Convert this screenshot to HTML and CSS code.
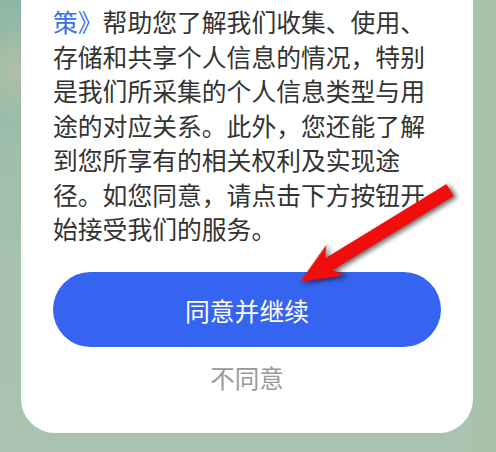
FILE: index.html
```html
<!DOCTYPE html>
<html lang="zh-CN">
<head>
<meta charset="utf-8"/>
<meta content="width=device-width, initial-scale=1.0" name="viewport"/>
<title>个人信息保护指引</title>
<link rel="stylesheet" href="styles.css">
</head>
<body>
<div class="dialog">
  <p class="policy">
    <a class="policy-link" href="#">策》</a>帮助您了解我们收集、使用、<br/>存储和共享个人信息的情况，特别<br/>是我们所采集的个人信息类型与用<br/>途的对应关系。此外，您还能了解<br/>到您所享有的相关权利及实现途<br/>径。如您同意，请点击下方按钮开<br/>始接受我们的服务。
  </p>
  <button class="btn-agree">同意并继续</button>
  <div class="btn-decline">不同意</div>
</div>
<!-- red pointer drawn over the dialog -->
<svg class="pointer" width="496" height="452" viewBox="0 0 496 452">
  <g transform="translate(300 282) rotate(-31.5)">
    <polygon class="pointer-shape" points="0,0 42,-18 34,-7 176,-7 176,7 34,7 42,18"/>
  </g>
</svg>
</body>
</html>
```

FILE: styles.css
```css
  body {
    margin: 0;
    width: 496px;
    height: 452px;
    overflow: hidden;
    position: relative;
    font-family: "Noto Sans CJK SC", "Noto Sans", sans-serif;
    background:
      radial-gradient(ellipse 30px 50px at 14px 70px, rgba(200,196,160,0.55), transparent),
      linear-gradient(to right, transparent 0 470px, #a8c1ab 470px),
      linear-gradient(to bottom, #8fb6a6 0%, #9dbdab 30%, #a7c1ad 60%, #aac3ae 100%);
  }
  .dialog {
    margin: 0 23px 0 21px;
    padding: 4px 32px 40px;
    background: #ffffff;
    border-radius: 0 0 34px 34px;
  }
  .policy {
    margin: 0;
    font-size: 24.8px;
    line-height: 34.5px;
    color: #333333;
    white-space: nowrap;
  }
  .policy-link {
    color: #3a6fe8;
    text-decoration: none;
  }
  .btn-agree {
    display: block;
    width: 100%;
    height: 75px;
    margin-top: 26.5px;
    border: none;
    border-radius: 38px;
    background-color: #3464f0;
    color: #ffffff;
    font-family: inherit;
    font-size: 24.8px;
    cursor: pointer;
  }
  .btn-decline {
    margin-top: 16px;
    text-align: center;
    font-size: 24.5px;
    line-height: 30px;
    color: #999999;
  }
  .pointer {
    position: absolute;
    top: 0;
    left: 0;
    pointer-events: none;
  }
  .pointer-shape {
    fill: #f20d0d;
    filter: drop-shadow(2px 3px 2.5px rgba(0,0,0,0.6));
  }
```
